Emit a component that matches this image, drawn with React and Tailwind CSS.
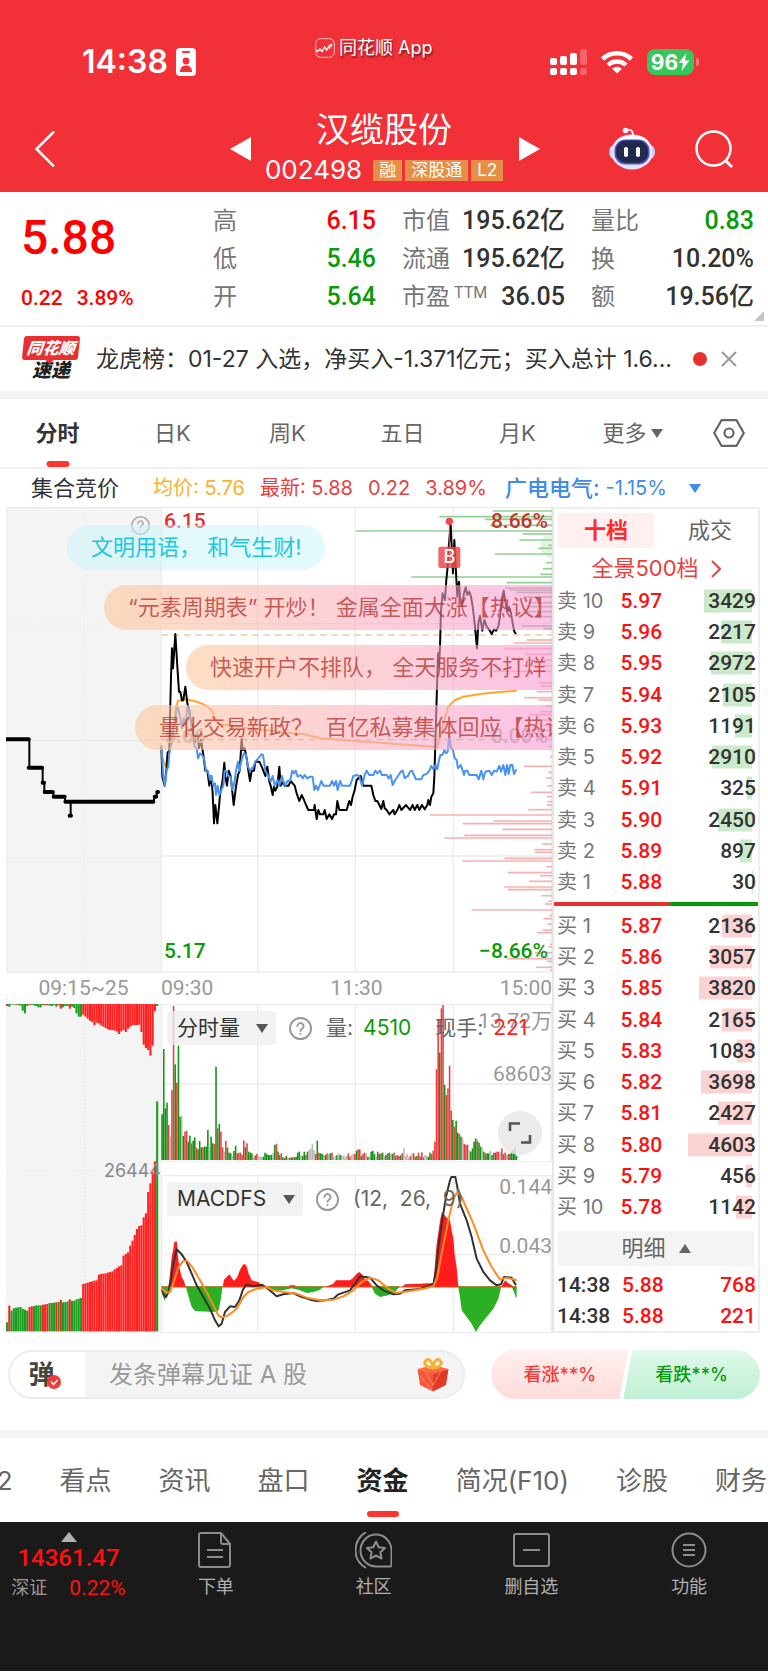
import React, { useState } from "react";

const stats = [
  { label: "高", value: "6.15", color: "text-[#ff0000]" },
  { label: "市值", value: "195.62亿", color: "text-[#333333]" },
  { label: "量比", value: "0.83", color: "text-[#0a9a0a]" },
  { label: "低", value: "5.46", color: "text-[#0a9a0a]" },
  { label: "流通", value: "195.62亿", color: "text-[#333333]" },
  { label: "换", value: "10.20%", color: "text-[#333333]" },
  { label: "开", value: "5.64", color: "text-[#0a9a0a]" },
  { label: "市盈", sup: "TTM", value: "36.05", color: "text-[#333333]" },
  { label: "额", value: "19.56亿", color: "text-[#333333]" },
];

const periods = ["分时", "日K", "周K", "五日", "月K"];

const sells = [
  ["10", "5.97", 3429],
  ["9", "5.96", 2217],
  ["8", "5.95", 2972],
  ["7", "5.94", 2105],
  ["6", "5.93", 1191],
  ["5", "5.92", 2910],
  ["4", "5.91", 325],
  ["3", "5.90", 2450],
  ["2", "5.89", 897],
  ["1", "5.88", 30],
];

const buys = [
  ["1", "5.87", 2136],
  ["2", "5.86", 3057],
  ["3", "5.85", 3820],
  ["4", "5.84", 2165],
  ["5", "5.83", 1083],
  ["6", "5.82", 3698],
  ["7", "5.81", 2427],
  ["8", "5.80", 4603],
  ["9", "5.79", 456],
  ["10", "5.78", 1142],
];

const infoTabs = ["L2", "看点", "资讯", "盘口", "资金", "简况(F10)", "诊股", "财务"];

// Chart data, in chart units (3 units per css pixel)
const priceLine =
  "484,740 487,830 494,857 500,800 503,757 508,757 510,650 513,530 516,445 519,505 526,402 532,500 537,575 541,575 546,602 550,600 556,560 562,610 568,632 572,660 578,690 582,730 588,720 592,700 597,745 603,720 610,765 616,812 622,812 628,857 634,828 638,880 642,970 646,915 652,970 656,930 660,885 668,840 673,788 676,830 681,857 686,812 692,828 701,915 708,860 714,825 719,812 725,718 728,750 734,745 740,775 745,812 750,843 755,812 762,812 766,785 778,785 785,800 790,812 796,828 802,800 808,845 812,857 818,885 822,860 826,872 832,860 838,800 842,857 850,845 854,857 866,857 872,843 878,850 884,857 890,880 898,903 905,885 912,900 918,915 925,930 942,930 944,915 950,957 955,930 960,943 970,943 974,930 980,957 988,943 996,957 1002,943 1008,943 1012,903 1018,930 1040,930 1045,912 1048,903 1053,915 1058,890 1064,870 1070,840 1082,828 1090,857 1114,857 1120,885 1126,903 1132,903 1138,915 1144,927 1150,903 1154,925 1160,930 1168,943 1180,930 1184,943 1192,930 1198,915 1204,930 1218,915 1230,930 1238,915 1244,930 1252,915 1258,930 1266,915 1274,928 1282,915 1285,900 1290,915 1294,890 1300,880 1303,830 1307,700 1311,560 1314,460 1317,500 1320,440 1323,330 1328,280 1335,300 1339,240 1343,200 1347,130 1352,75 1356,160 1359,220 1363,120 1367,200 1372,290 1377,245 1380,290 1386,318 1392,280 1397,262 1402,285 1408,275 1413,290 1418,320 1424,370 1431,445 1435,370 1440,347 1447,392 1453,360 1460,380 1467,388 1475,402 1482,388 1488,392 1495,380 1500,350 1505,300 1511,272 1517,310 1521,335 1527,320 1533,340 1538,370 1543,395 1548,402";

const indexLine =
  "484,735 490,830 495,857 500,810 505,800 508,757 515,730 520,690 526,660 530,625 534,622 540,650 546,685 551,655 557,672 562,620 566,628 572,665 578,700 584,740 590,745 594,775 600,760 606,765 612,775 618,812 624,815 630,840 634,828 640,857 645,850 648,885 653,857 658,885 664,870 670,857 674,812 680,815 686,830 692,830 697,870 703,850 708,812 714,785 718,812 726,775 732,760 738,765 744,800 750,812 760,800 766,785 775,775 785,762 789,765 796,812 806,830 812,845 818,828 824,857 832,840 838,857 846,828 850,845 856,857 862,843 870,843 877,812 882,820 887,812 893,830 902,825 908,835 914,825 922,835 930,830 938,830 943,870 948,857 954,870 964,843 970,857 990,857 996,843 1002,857 1008,843 1013,870 1020,843 1026,857 1050,857 1056,840 1060,828 1070,825 1078,828 1086,857 1094,825 1100,812 1108,825 1120,825 1126,812 1132,820 1140,812 1146,825 1160,825 1166,835 1172,825 1178,855 1186,840 1194,828 1202,815 1208,812 1214,835 1220,830 1224,828 1230,815 1236,812 1242,825 1248,838 1264,838 1270,825 1280,822 1288,812 1294,798 1300,808 1307,795 1312,808 1316,785 1321,765 1327,765 1333,750 1338,760 1343,755 1348,705 1353,745 1359,750 1364,775 1370,780 1374,805 1382,795 1387,808 1392,825 1396,812 1402,812 1408,825 1430,825 1436,838 1444,812 1450,838 1456,815 1468,812 1475,825 1482,812 1490,815 1498,797 1503,815 1510,795 1516,825 1521,795 1526,822 1531,795 1537,795 1542,822 1549,808";

const averageLine =
  "484,765 497,800 505,760 513,720 520,680 528,620 535,602 560,598 590,605 615,615 635,630 645,655 655,672 700,678 740,685 800,690 860,698 910,702 960,715 1060,722 1140,728 1240,736 1312,741 1320,710 1330,670 1345,620 1365,600 1390,590 1440,582 1490,577 1550,572";

// [start x, y] of the chip distribution bars, all ending at the right edge
const chipsAbove = [
  [1478, 33], [1318, 50], [1455, 58], [1470, 76], [1068, 93], [1568, 102], [1558, 120], [1645, 136], [1615, 145], [1485, 162], [1638, 188], [1628, 206], [1620, 223], [1233, 231], [1520, 248],
];
const chipsMixed = [
  [1515, 264], [1528, 270], [1550, 277], [1575, 291], [1585, 308], [1580, 320], [1570, 335], [1590, 350], [1565, 378], [1630, 386],
];
const chipsBelow = [
  [1580, 420], [1542, 429], [1512, 446], [1575, 463], [1580, 480], [1570, 497], [1480, 514], [1615, 549], [1620, 558], [1610, 575], [1573, 593], [1615, 600], [1635, 618], [1620, 635], [1590, 644], [1610, 660], [1630, 676], [1600, 690], [1620, 710], [1645, 740], [1650, 770], [1572, 799], [1645, 817], [1637, 834], [1642, 858], [1593, 877], [1640, 890], [1642, 905], [1640, 915], [1585, 929], [1290, 945], [1480, 963], [1388, 971], [1507, 988], [1393, 1006], [1333, 1014], [1627, 1032], [1603, 1049], [1605, 1057], [1513, 1075], [1386, 1083], [1640, 1100], [1523, 1118], [1620, 1127], [1587, 1144], [1513, 1161], [1523, 1169], [1625, 1187], [1645, 1204], [1635, 1212], [1415, 1230], [1648, 1247], [1630, 1256], [1642, 1272], [1628, 1290], [1610, 1298], [1650, 1333], [1645, 1341], [1605, 1358], [1520, 1376], [1640, 1384], [1608, 1402], [1650, 1410],
];

const volumes =
  "g137 g333 g155 g172 r105 k70 r210 r462 g287 r232 g343 g130 k133 g72 r85 r88 g55 g73 r50 g58 g68 r37 g32 g57 g38 r38 g40 g40 g90 k40 g70 g50 r48 g280 r95 g108 r85 r38 k25 r57 g37 g22 g20 k12 g27 g43 r20 r22 r22 r15 r58 g38 r50 g25 g22 g20 k10 r14 r18 k10 k12 k8 g10 g22 g18 g15 g15 g15 k22 g45 r48 g25 r15 r20 g8 r6 g12 k8 r6 g8 r8 g8 g10 g22 g25 k15 g12 g25 r15 g25 k30 k35 k48 k30 r18 g58 r22 g20 g18 k15 g15 r20 k18 g20 r22 k10 k12 g14 k20 g15 k14 k12 k10 k12 r20 r10 k15 k18 r18 g28 r32 r32 g12 r18 r22 k20 g10 k10 g25 g28 g18 k12 g25 g18 r20 g22 k12 g15 r20 g22 k18 g18 r22 r12 r15 r12 g14 r20 k35 k12 k18 k8 r12 k20 r20 r10 g12 r22 r10 r23 r8 k15 k12 g10 g22 r18 r28 r55 r272 r420 g322 r455 r465 g225 r195 r215 r283 r148 g120 r100 g118 g82 r78 g70 k65 r48 r45 r46 k30 g25 g35 g55 g65 r58 g52 g40 k38 g25 r20 g20 g20 k28 g15 r22 g22 r25 r25 k22 r35 r18 r22 k15 r18 g18 g25 g30 g38 g12"
    .split(" ")
    .map((s) => ({ tone: s[0], size: Number(s.slice(1)) }));

const auctionVolumes =
  "g27 r77 g62 g69 g71 g72 g73 g67 g65 g62 r73 r75 g76 g78 g78 g78 r80 r81 r82 g85 g85 g86 r87 g88 r94 g87 g88 g90 r96 g91 g92 g96 g98 g100 r142 r144 r146 r148 r150 r152 r153 r170 r172 r173 r174 r176 r178 r180 r186 r190 r195 r198 r227 r232 r237 r257 r272 r289 r307 r316 r318 r342 r354 r418 r444 r477 r510 g690"
    .split(" ")
    .map((s) => ({ tone: s[0], size: Number(s.slice(1)) }));

const auctionUnmatched =
  "r6 g8 g2 g2 r2 g3 g5 g20 g28 g6 r3 g3 g4 g6 g10 g10 r3 g4 r4 g5 g6 g3 g8 r4 r14 g10 g6 g6 r14 g8 g12 g28 g38 g38 r32 r38 r44 r50 r54 r64 r56 r58 r64 r68 r72 r76 r78 r78 r80 r82 r90 r82 r78 r84 r74 r68 r64 r63 r63 r62 r84 r122 r132 r138 r155 r125 r22 g6"
    .split(" ")
    .map((s) => ({ tone: s[0], size: Number(s.slice(1)) }));

const tones = { r: "#e8403f", g: "#119411", k: "#b9b9b9" };
const auctionTones = { r: "#ff2222", g: "#1f9f22" };

const macdRed =
  "M505 890 L508 870 L512 830 L515 800 L520 775 L523 754 H531 L533 790 L538 830 L545 860 L552 872 L557 890Z M668 890 L672 868 L680 860 L688 852 L695 862 L702 872 L712 860 L720 838 L728 825 L733 820 L740 828 L746 850 L755 870 L775 875 L785 885 L792 890Z M865 890 L870 885 H885 L890 890Z M970 890 L985 886 L1000 880 L1008 870 H1050 L1060 862 L1070 850 L1078 845 L1086 852 L1094 865 L1105 872 L1115 885 L1118 890Z M1205 890 L1215 882 L1260 880 L1300 878 L1305 820 L1310 760 L1316 720 L1321 685 L1326 665 L1332 672 L1338 680 L1350 690 L1354 715 L1360 745 L1365 800 L1370 830 L1374 880 L1376 890Z M1504 890 L1510 878 L1516 870 L1524 878 L1534 884 L1540 890Z";
const macdGreen =
  "M484 888 L488 915 L494 932 L500 915 L506 888Z M557 888 L566 920 L575 950 L585 962 L640 965 L655 962 L662 930 L668 888Z M795 888 L820 902 L850 900 L875 894 L900 900 L920 908 L940 905 L960 898 L972 888Z M1114 888 L1125 910 L1140 920 L1165 915 L1185 905 L1200 888Z M1374 888 L1380 920 L1385 960 L1400 980 L1415 1000 L1428 1025 L1440 1005 L1460 980 L1480 955 L1495 925 L1504 888Z M1534 888 L1542 905 L1548 922 H1550 V888Z";
const difLine =
  "484,895 492,915 498,920 505,905 512,870 520,820 530,777 545,792 560,815 575,850 590,885 610,920 630,955 645,990 656,1008 665,1000 675,965 690,948 705,950 718,930 728,900 738,883 760,888 785,883 800,892 815,905 830,918 850,912 880,908 900,918 930,928 950,932 975,930 1000,925 1015,912 1050,900 1065,880 1080,858 1110,862 1130,885 1150,900 1180,912 1200,910 1215,900 1260,896 1300,882 1308,840 1314,780 1325,700 1338,620 1350,570 1354,560 1366,560 1372,590 1380,640 1400,690 1415,740 1430,805 1450,845 1470,870 1490,885 1503,882 1512,860 1535,862 1548,885";
const deaLine =
  "484,895 500,907 510,905 520,880 535,830 550,812 562,812 580,835 600,870 620,905 640,945 655,975 665,982 685,975 710,955 730,920 745,905 770,895 800,890 820,900 850,905 890,910 920,922 960,930 1000,928 1030,918 1060,900 1085,875 1110,862 1135,870 1165,895 1190,908 1230,902 1270,895 1300,888 1312,860 1325,790 1345,690 1360,625 1372,604 1385,620 1420,700 1450,780 1475,830 1500,868 1520,862 1550,870";

const Triangle = ({ className }) => (
  <svg viewBox="0 0 12 10" className={className} fill="currentColor" preserveAspectRatio="none" aria-hidden="true">
    <path d="M0 0H12L6 10Z" />
  </svg>
);

const HelpIcon = ({ className }) => (
  <svg viewBox="0 0 24 24" className={className} fill="none" stroke="currentColor" strokeWidth="2" strokeLinecap="round" aria-hidden="true">
    <circle cx="12" cy="12" r="11" />
    <path d="M8.8 9.5a3.2 3.2 0 1 1 4.8 2.8c-1 .6-1.6 1.1-1.6 2.2M12 17.6v.2" />
  </svg>
);

const StatusBar = () => (
  <div className="relative flex h-24 items-center justify-between pt-7 pl-[82px] pr-[69px]">
    <div className="flex items-center gap-2">
      <span className="text-[32px] leading-none font-semibold">14:38</span>
      <svg viewBox="0 0 20 28" className="h-7 w-5" aria-hidden="true">
        <rect width="20" height="28" rx="4" fill="#fff" />
        <rect x="6" y="3" width="8" height="2" rx="1" fill="#f23037" />
        <circle cx="10" cy="13" r="3.4" fill="#f23037" />
        <path d="M4 24c0-4.500 2.600-6.500 6-6.500s6 2 6 6.500z" fill="#f23037" />
      </svg>
    </div>
    <div className="absolute top-[37px] left-[315px] flex items-center gap-1 text-[18px] leading-[22px] [text-shadow:1px_2px_2px_rgba(0,0,0,0.5)]">
      <svg viewBox="0 0 20 20" className="h-5 w-5" fill="none" stroke="#fff" aria-hidden="true">
        <rect x="0.700" y="0.700" width="18.600" height="18.600" rx="5" strokeOpacity="0.700" />
        <path d="M1 12l1.500 1.500L5 11l2 2.500L9.500 9l2 3L14 8.500l1 2" strokeWidth="1.400" />
        <path d="M13.500 7l4-1.500-1 4z" fill="#fff" stroke="none" />
      </svg>
      <span>同花顺 App</span>
    </div>
    <div className="flex items-center">
      <svg viewBox="0 0 37 26" className="h-[26px] w-[37px]" fill="#fff" aria-hidden="true">
        <rect x="0" y="9" width="7" height="7" rx="2" />
        <rect x="10" y="7" width="7" height="9" rx="2" />
        <rect x="20" y="4" width="7" height="12" rx="2" />
        <rect x="30" y="0" width="7" height="16" rx="2" opacity="0.250" />
        <rect x="0" y="19" width="7" height="7" rx="2" />
        <rect x="10" y="19" width="7" height="7" rx="2" />
        <rect x="20" y="19" width="7" height="7" rx="2" />
        <rect x="30" y="19" width="7" height="7" rx="2" opacity="0.250" />
      </svg>
      <svg viewBox="0 0 32 24" className="ml-[14px] h-6 w-8" fill="none" stroke="#fff" strokeWidth="4.500" aria-hidden="true">
        <path d="M1.500 9a21 21 0 0 1 29 0" />
        <path d="M7 15a13 13 0 0 1 18 0" />
        <path d="M16 23.500l-4.800-4.800a7 7 0 0 1 9.600 0z" fill="#fff" stroke="none" />
      </svg>
      <span className="ml-[14px] flex h-[26px] w-[47px] items-center justify-center rounded-lg bg-[#34c759] text-[21px] leading-none font-bold">
        96
        <svg viewBox="0 0 12 18" className="h-[18px] w-3" fill="#fff" aria-hidden="true">
          <path d="M8.500 0L0.500 10H5L3.500 18L11.500 7.500H7Z" />
        </svg>
      </span>
      <span className="ml-[2px] h-2 w-[3px] rounded-r-full bg-white/35" />
    </div>
  </div>
);

const Robot = () => (
  <svg viewBox="0 0 46 44" className="h-11 w-[46px]" aria-hidden="true">
    <path d="M17 3c4-1 7 0 7 5" fill="none" stroke="#dfe2fb" strokeWidth="2" />
    <circle cx="16.500" cy="3.500" r="2.800" fill="#eceefe" />
    <rect x="0" y="18" width="46" height="14" rx="6" fill="#c3c7f3" />
    <ellipse cx="23" cy="25" rx="21" ry="17.500" fill="#e0e2fa" />
    <ellipse cx="23" cy="17" rx="17" ry="9" fill="#fafaff" />
    <rect x="5.500" y="12.500" width="35" height="25" rx="11" fill="#5a50c8" />
    <rect x="7" y="13.500" width="32" height="22.500" rx="10" fill="#1f2a4c" />
    <rect x="15" y="20" width="4" height="10" rx="2" fill="#fff" />
    <rect x="27" y="20" width="4" height="10" rx="2" fill="#fff" />
  </svg>
);

const TitleBar = () => (
  <div className="grid h-24 grid-cols-[1fr_auto_1fr] items-center pt-[10px]">
    <div className="flex items-center justify-between pl-[35px] pr-[14px]">
      <button aria-label="返回">
        <svg viewBox="0 0 20 36" className="h-9 w-5" fill="none" stroke="#fff" strokeWidth="2.500">
          <path d="M19 0.500L1.500 18L19 35.500" />
        </svg>
      </button>
      <button aria-label="上一只">
        <svg viewBox="0 0 21 24" className="h-6 w-[21px]" fill="#fff">
          <path d="M21 0V24L0 12Z" />
        </svg>
      </button>
    </div>
    <div className="flex flex-col items-center gap-[2px]">
      <h1 className="text-[34px] leading-10">汉缆股份</h1>
      <div className="flex items-center gap-[3px]">
        <span className="mr-2 text-[26px] leading-9">002498</span>
        {["融", "深股通", "L2"].map((tag) => (
          <span key={tag} className="bg-[#e58e46] px-[6px] text-[17px] leading-[21px]">
            {tag}
          </span>
        ))}
      </div>
    </div>
    <div className="flex items-center pl-4 pr-[35px]">
      <button aria-label="下一只">
        <svg viewBox="0 0 21 24" className="h-6 w-[21px]" fill="#fff">
          <path d="M0 0V24L21 12Z" />
        </svg>
      </button>
      <button aria-label="智能助手" className="ml-auto">
        <Robot />
      </button>
      <button aria-label="搜索" className="ml-10">
        <svg viewBox="0 0 38 38" className="h-[38px] w-[38px]" fill="none" stroke="#fff" strokeWidth="2.500">
          <circle cx="18.500" cy="18.500" r="17" />
          <path d="M30.500 30.500L37 37" strokeWidth="3" />
        </svg>
      </button>
    </div>
  </div>
);

const Summary = () => (
  <section className="relative grid grid-cols-[166px_1fr] gap-x-[26px] border-b-2 border-[#f0f0f0] pt-[10px] pb-[9px] pl-[21px] pr-[14px] font-['Roboto','Noto_Sans_CJK_SC',sans-serif]">
    <div className="text-[#ff0000]">
      <div className="pt-2 text-[48px] leading-[56px] font-medium">5.88</div>
      <div className="flex gap-[14px] pt-5 text-[21px] leading-6 font-medium">
        <span>0.22</span>
        <span>3.89%</span>
      </div>
    </div>
    <dl className="grid grid-cols-3 gap-x-[26px]">
      {stats.map((item) => (
        <div key={item.label} className="flex h-[38px] items-center justify-between">
          <dt className="flex text-[24px] whitespace-nowrap text-[#777777]">
            {item.label}
            {item.sup && <span className="ml-1 pt-1 text-[16px] leading-5">{item.sup}</span>}
          </dt>
          <dd className={`text-[25px] font-medium whitespace-nowrap ${item.color}`}>{item.value}</dd>
        </div>
      ))}
    </dl>
    <svg viewBox="0 0 10 10" className="absolute right-1 bottom-1 h-[10px] w-[10px]" fill="#c4c4c4" aria-hidden="true">
      <path d="M10 0V10H0Z" />
    </svg>
  </section>
);

const News = () => (
  <section className="flex h-[72px] items-center border-b-8 border-[#f4f4f4] pl-[23px] pr-[31px]">
    <div className="w-14 shrink-0 text-center font-black italic">
      <div className="relative -skew-x-6 rounded-[3px] bg-[#e93030] text-[16px] leading-[24px] text-white">
        同花顺
        <Triangle className="absolute top-6 left-6 h-1 w-2 text-[#e93030]" />
      </div>
      <div className="text-[19px] leading-[22px] text-[#222222]">速递</div>
    </div>
    <a href="#news" className="ml-[17px] min-w-0 flex-1 truncate text-[23px] text-[#333333]">
      龙虎榜：01-27 入选，净买入-1.371亿元；买入总计 1.6...
    </a>
    <span className="ml-4 h-[14px] w-[14px] rounded-full bg-[#e93030]" />
    <button aria-label="关闭" className="ml-[14px]">
      <svg viewBox="0 0 16 16" className="h-4 w-4" stroke="#999" strokeWidth="2">
        <path d="M1 1L15 15M15 1L1 15" />
      </svg>
    </button>
  </section>
);

const PeriodTabs = () => {
  const [active, setActive] = useState("分时");
  return (
    <nav className="grid h-[70px] grid-cols-[repeat(6,1fr)_78px] border-b-2 border-[#f0f0f0] text-[22px]">
      {periods.map((period) => (
        <button
          key={period}
          onClick={() => setActive(period)}
          className={`relative ${period === active ? "font-bold text-[#333333]" : "text-[#666666]"}`}
        >
          {period}
          {period === active && (
            <span className="absolute bottom-0 left-1/2 h-[6px] w-[23px] -translate-x-1/2 rounded-[3px] bg-[#fb3630]" />
          )}
        </button>
      ))}
      <button className="flex items-center justify-center gap-1 text-[#666666]">
        更多
        <Triangle className="h-[9px] w-3" />
      </button>
      <button aria-label="设置" className="flex items-center justify-center">
        <svg viewBox="0 0 32 28" className="h-7 w-8" fill="none" stroke="#666" strokeWidth="2.200" strokeLinejoin="round">
          <path d="M8.500 1.200H23.500L30.800 14L23.500 26.800H8.500L1.200 14Z" />
          <circle cx="16" cy="14" r="4.500" />
        </svg>
      </button>
    </nav>
  );
};

const Danmu = ({ className, children }) => (
  <div className={`flex h-[45px] items-center text-[22px] whitespace-pre ${className}`}>{children}</div>
);

const PriceChart = () => (
  <div className="relative overflow-hidden">
    <svg viewBox="18 21 1638 1398" className="block h-auto w-full" aria-label="分时图">
      <rect x="18" y="21" width="466" height="1398" fill="#f4f4f4" />
      <g stroke="#ececec" strokeWidth="4" fill="none">
        <path d="M20 23H1654V1416H20Z" />
        <path d="M484 21V1419M773 21V1419M1066 21V1419M1360 21V1419" />
        <path d="M484 371H1656M18 721H484M484 1068H1656" />
        <path d="M253 21V1419M18 372H484M18 1074H484" strokeDasharray="6 5" strokeWidth="3" />
      </g>
      <path d="M484 405H1656" stroke="#e5cfa8" strokeWidth="4" strokeDasharray="20 14" />
      <path d="M484 719H1656" stroke="#b5b5b5" strokeWidth="4" strokeDasharray="20 14" />
      <circle cx="1658" cy="137" r="36" fill="#dff3df" />
      <g stroke="#93d093" strokeWidth="5">
        {chipsAbove.map(([x, y]) => (
          <path key={y} d={`M${x} ${y}H1656`} />
        ))}
      </g>
      <g stroke="#8fbf94" strokeWidth="5">
        {chipsMixed.map(([x, y]) => (
          <path key={y} d={`M${x} ${y}H1656`} />
        ))}
      </g>
      <g stroke="#f7b0b0" strokeWidth="5">
        {chipsBelow.map(([x, y]) => (
          <path key={y} d={`M${x} ${y}H1656`} />
        ))}
      </g>
      <path d="M18 718H88V803H128V848H133V876H160V890H195V905H212V947M212 905H462V890H470V876" fill="none" stroke="#000" strokeWidth="6" />
      <path
        d="M18 718H86M86 803H126M128 848H132M134 876H158M161 890H194M196 905H460M209 947H213M464 890H468M472 876H474"
        fill="none"
        stroke="#000"
        strokeWidth="12"
        strokeLinecap="round"
      />
      <g fill="none" strokeWidth="6" strokeLinejoin="round">
        <polyline points={averageLine} stroke="#ffa632" />
        <polyline points={priceLine} stroke="#000" />
        <polyline points={indexLine} stroke="#4a93ee" />
      </g>
      <path d="M1348 64V140" stroke="#e8474a" strokeWidth="3" />
      <circle cx="1348" cy="64" r="11" fill="#f04a4f" />
      <rect x="1315" y="140" width="66" height="64" rx="6" fill="#ee4a4a" fillOpacity="0.850" />
    </svg>
    <div className="absolute inset-0 flex justify-between pl-[158px] pr-1 font-['Roboto'] text-[21px] leading-6 font-medium">
      <div className="flex flex-col justify-between pt-[2px] pb-[10px]">
        <span className="text-[#e33030]">6.15</span>
        <span className="text-[#aaaaaa]">5.66</span>
        <span className="text-[#0a9a0a]">5.17</span>
      </div>
      <div className="flex flex-col justify-between pt-[2px] pb-[10px] text-right">
        <span className="text-[#c43530]">8.66%</span>
        <span className="text-[#aaaaaa]">0.00%</span>
        <span className="text-[#0a9a0a]">−8.66%</span>
      </div>
    </div>
    <span className="absolute top-[38px] left-[432px] w-[23px] text-center text-[18px] leading-6 font-medium text-white">B</span>
    <HelpIcon className="absolute top-[9px] left-[125px] h-[19px] w-[19px] text-[#aaaaaa]" />
    <div className="absolute inset-0 flex flex-col gap-[15px] pt-[18px] text-[#b83a36]/80">
      <Danmu className="ml-[61px] w-[258px] rounded-full bg-[#caf4f8]/50 pl-6 text-[#1cc8dc]">文明用语， 和气生财!</Danmu>
      <Danmu className="ml-[98px] rounded-l-full bg-linear-to-r from-[#fdc89a]/60 to-[#f99ad6]/60 pl-6">
        “元素周期表” 开炒！ 金属全面大涨【热议】
      </Danmu>
      <Danmu className="ml-[180px] rounded-l-full bg-linear-to-r from-[#fdc89a]/60 to-[#f99ad6]/60 pl-6">
        快速开户不排队， 全天服务不打烊
      </Danmu>
      <Danmu className="ml-[129px] rounded-l-full bg-linear-to-r from-[#fdc89a]/60 to-[#f99ad6]/60 pl-6">
        量化交易新政？  百亿私募集体回应【热议】
      </Danmu>
    </div>
  </div>
);

const AuctionVolume = () => (
  <div className="relative min-w-0 flex-[155]">
    <svg viewBox="18 40 465 988" className="block h-auto w-full" aria-label="集合竞价量">
      <rect x="18" y="40" width="465" height="988" fill="#f4f4f4" />
      <path d="M253 40V1022M18 540H483" stroke="#e8e8e8" strokeWidth="3" strokeDasharray="6 5" />
      {auctionUnmatched.map((bar, i) => (
        <rect key={i} x={18 + i * 6.72} y="40" width="6.400" height={bar.size} fill={auctionTones[bar.tone]} />
      ))}
      {auctionVolumes.map((bar, i) => (
        <rect key={i} x={18 + i * 6.72} y={1022 - bar.size} width="6.400" height={bar.size} fill={auctionTones[bar.tone]} />
      ))}
    </svg>
    <span className="absolute top-[155px] right-0 text-[18px] leading-6 text-[#888888]">26444</span>
  </div>
);

const IndicatorSelect = ({ label, value, className }) => (
  <div className="relative">
    <select
      aria-label={label}
      defaultValue={value}
      className={`h-[34px] appearance-none rounded-sm bg-[#efefef]/80 pl-[10px] text-[21px] text-[#333333] ${className}`}
    >
      <option>{value}</option>
    </select>
    <Triangle className="pointer-events-none absolute top-[13px] right-[8px] h-[9px] w-3 text-[#555555]" />
  </div>
);

const VolumeChart = () => (
  <div className="relative">
    <svg viewBox="483 40 1173 475" className="block h-auto w-full" aria-label="分时量">
      <g stroke="#ececec" strokeWidth="4" fill="none">
        <path d="M485 42H1654V514H485Z" />
        <path d="M773 40V515M1066 40V515M1360 40V515M484 280H1656" />
      </g>
      {volumes.map((bar, i) => (
        <rect key={i} x={484 + i * 4.9} y={508 - bar.size} width="4.700" height={bar.size} fill={tones[bar.tone]} />
      ))}
    </svg>
    <div className="absolute inset-0 flex flex-col items-end gap-[29px] pt-[5px] font-['Roboto','Noto_Sans_CJK_SC',sans-serif] text-[21px] leading-6 text-[#999999]">
      <span>13.72万</span>
      <span>68603</span>
    </div>
    <div className="absolute top-[7px] left-[6px] flex items-center text-[21px] text-[#666666]">
      <IndicatorSelect label="副图指标" value="分时量" className="w-[109px]" />
      <HelpIcon className="ml-[13px] h-[23px] w-[23px] text-[#999999]" />
      <span className="ml-[14px]">量:</span>
      <span className="ml-[10px] text-[#0a9a0a]">4510</span>
      <span className="ml-6">现手:</span>
      <span className="ml-[10px] text-[#ff2020]">221</span>
    </div>
    <button aria-label="全屏" className="absolute right-[10px] bottom-[7px] flex h-11 w-11 items-center justify-center rounded-full bg-[#e8e8e8]/85">
      <svg viewBox="0 0 24 24" className="h-6 w-6" fill="none" stroke="#555" strokeWidth="2.600">
        <path d="M2 10V2.500H12M22 14V21.500H13" />
      </svg>
    </button>
  </div>
);

const MacdChart = () => (
  <div className="relative">
    <svg viewBox="483 554 1173 475" className="block h-auto w-full" aria-label="MACDFS">
      <g stroke="#ececec" strokeWidth="4" fill="none">
        <path d="M485 556H1654V1027H485Z" />
        <path d="M773 554V1029M1066 554V1029M1360 554V1029M484 793H1656" />
      </g>
      <path d={macdGreen} fill="#2bb024" />
      <path d={macdRed} fill="#ff1c1c" />
      <path d="M484 890H1550" stroke="#e0541c" strokeWidth="3" />
      <g fill="none" strokeWidth="6" strokeLinejoin="round">
        <polyline points={difLine} stroke="#333" />
        <polyline points={deaLine} stroke="#ff8a1f" />
      </g>
    </svg>
    <div className="absolute inset-0 flex flex-col items-end gap-[35px] font-['Roboto'] text-[21px] leading-6 text-[#999999]">
      <span>0.144</span>
      <span>0.043</span>
    </div>
    <div className="absolute top-[7px] left-[6px] flex items-center text-[21px] text-[#666666]">
      <IndicatorSelect label="技术指标" value="MACDFS" className="w-[136px]" />
      <HelpIcon className="ml-[13px] h-[23px] w-[23px] text-[#999999]" />
      <span className="ml-[14px] whitespace-pre">(12,  26,  9)</span>
    </div>
  </div>
);

const Depth = ({ side, rows, barColor }) => (
  <table className="h-[313px] w-full text-[21px] leading-6">
    <tbody>
      {rows.map(([level, price, amount]) => (
        <tr key={level}>
          <th scope="row" className="w-[68px] pl-[3px] text-left text-[20px] font-normal whitespace-nowrap text-[#777777]">
            {side} {level}
          </th>
          <td className="font-['Roboto'] font-medium text-[#ff1010]">{price}</td>
          <td className="relative w-[100px] pr-[2px] text-right font-['Roboto'] text-[#333333]">
            <span
              className={`absolute top-1/2 right-[6px] h-[23px] -translate-y-1/2 ${barColor}`}
              style={{ width: `${(amount / 4603) * 64}px` }}
            />
            <span className="relative font-medium">{amount}</span>
          </td>
        </tr>
      ))}
    </tbody>
  </table>
);

const OrderBook = () => (
  <aside className="flex w-[208px] shrink-0 flex-col border-2 border-l-[#e6e6e6] border-[#eeeeee]">
    <div className="flex pt-1 pl-1 text-[22px]">
      <button className="h-[35px] flex-1 rounded-sm bg-[#fff0f0] font-bold text-[#ff2a2a]">十档</button>
      <button className="h-[35px] flex-1 pl-2 text-[#666666]">成交</button>
    </div>
    <button className="flex h-[37px] items-center justify-center gap-3 pt-1 text-[22px] text-[#e84040]">
      全景500档
      <svg viewBox="0 0 10 18" className="h-[18px] w-[10px]" fill="none" stroke="currentColor" strokeWidth="2">
        <path d="M1 1L9 9L1 17" />
      </svg>
    </button>
    <Depth side="卖" rows={sells} barColor="bg-[#cbeacb]" />
    <div className="my-1 flex h-1">
      <span className="flex-[117] bg-[#e93030]" />
      <span className="flex-[88] bg-[#0a9a0a]" />
    </div>
    <Depth side="买" rows={buys} barColor="bg-[#fbd3d3]" />
    <button className="mx-1 mt-2 flex h-[35px] items-center justify-center gap-[13px] bg-[#f4f4f4] text-[22px] text-[#666666]">
      明细
      <Triangle className="h-[9px] w-3 rotate-180" />
    </button>
    <table className="mt-[3px] w-full flex-1 font-['Roboto'] text-[21px] leading-6 font-medium text-[#ff1010]">
      <tbody>
        {["768", "221"].map((amount) => (
          <tr key={amount}>
            <td className="h-[31px] w-[68px] pl-[3px] text-[#333333]">14:38</td>
            <td>5.88</td>
            <td className="pr-[2px] text-right">{amount}</td>
          </tr>
        ))}
      </tbody>
    </table>
  </aside>
);

const DanmuBar = () => (
  <section className="flex gap-[26px] border-b-8 border-[#f4f4f4] px-2 pt-[17px] pb-[31px]">
    <div className="flex h-[49px] flex-[456] items-center overflow-hidden rounded-full border-2 border-[#ececec] bg-[#f4f4f4]">
      <button aria-label="弹幕开关" className="relative h-full w-[75px] shrink-0 bg-white pr-3 text-[26px] font-bold text-[#444444]">
        弹
        <svg viewBox="0 0 14 14" className="absolute bottom-2 left-[37px] h-[14px] w-[14px]" aria-hidden="true">
          <circle cx="7" cy="7" r="7" fill="#f23a36" />
          <path d="M4 6.500L6.500 9.500L10.500 5" fill="none" stroke="#fff" strokeWidth="1.600" />
        </svg>
      </button>
      <input
        aria-label="发条弹幕"
        placeholder="发条弹幕见证 A 股"
        className="h-full min-w-0 flex-1 bg-transparent pl-6 text-[24px] placeholder:text-[#999999]"
      />
      <button aria-label="礼物" className="mr-[14px]">
        <svg viewBox="0 0 32 34" className="h-[34px] w-8">
          <path d="M0.500 11L16 15V33.500L3 27Z" fill="#f4573a" />
          <path d="M31.500 11L16 15V33.500L29 27Z" fill="#e03a26" />
          <path d="M0.500 11L16 7L31.500 11L16 16Z" fill="#ff6a45" />
          <path d="M8 13L16 27M24 13L16 27M3 18L15 32" fill="none" stroke="#ff8a60" strokeWidth="1" />
          <path d="M16 10C9 10 6 5 9 2.500S15 3 16 9c1-6 4-9 7-6.500S23 10 16 10z" fill="none" stroke="#f5b335" strokeWidth="3" />
        </svg>
      </button>
    </div>
    <div className="flex h-[49px] flex-[270] text-[18px] font-medium">
      <button className="flex-1 rounded-l-full bg-linear-to-b from-[#ffefee] to-[#fddcda] text-[#f53b36] [clip-path:polygon(0_0,100%_0,calc(100%-9px)_100%,0_100%)]">
        看涨**%
      </button>
      <button className="-ml-[5px] flex-1 rounded-r-full bg-linear-to-b from-[#dff8ea] to-[#bff0d3] text-[#0a9a0a] [clip-path:polygon(9px_0,100%_0,100%_100%,0_100%)]">
        看跌**%
      </button>
    </div>
  </section>
);

const InfoTabs = () => {
  const [active, setActive] = useState("资金");
  return (
    <nav className="flex h-[84px] gap-[47px] overflow-hidden text-[26px] whitespace-nowrap text-[#666666]">
      {infoTabs.map((tab) => (
        <button
          key={tab}
          onClick={() => setActive(tab)}
          className={`relative shrink-0 first:-ml-[18px] ${tab === active ? "font-bold text-[#222222]" : ""}`}
        >
          {tab}
          {tab === active && (
            <span className="absolute bottom-[5px] left-1/2 h-[6px] w-8 -translate-x-1/2 rounded-[3px] bg-[#fb3630]" />
          )}
        </button>
      ))}
    </nav>
  );
};

const actions = [
  {
    name: "下单",
    icon: (
      <>
        <path d="M2 3a2 2 0 0 1 2-2H24L33 12V33a2 2 0 0 1-2 2H4a2 2 0 0 1-2-2Z" />
        <path d="M24 1V10a2 2 0 0 0 2 2H33M10 18H26M10 25H26" />
      </>
    ),
  },
  {
    name: "社区",
    icon: (
      <>
        <path d="M35 34.500H21A15.500 16 0 1 1 36.500 18.500V33a1.500 1.500 0 0 1-1.500 1.500Z" />
        <path d="M11 0C-3 9-3 28 11 36" />
        <path d="M21 9.500L23.700 15.200L30 16L25.400 20.300L26.600 26.500L21 23.500L15.400 26.500L16.600 20.300L12 16L18.300 15.200Z" />
      </>
    ),
  },
  {
    name: "删自选",
    icon: (
      <>
        <rect x="1" y="2" width="35" height="32" rx="2" />
        <path d="M10 18H27" />
      </>
    ),
  },
  {
    name: "功能",
    icon: (
      <>
        <circle cx="18" cy="18" r="16.500" />
        <path d="M12 13H24M12 18H24M12 23H24" />
      </>
    ),
  },
];

const BottomBar = () => (
  <footer className="flex h-[149px] bg-[#1a1a1a] pt-[10px] text-[18px] text-[#b0b0b0]">
    <button className="flex w-[137px] flex-col items-center font-['Roboto','Noto_Sans_CJK_SC',sans-serif] text-[#ff1010]">
      <Triangle className="h-[10px] w-4 rotate-180 text-[#b0b0b0]" />
      <span className="text-[24px] leading-8 font-medium">14361.47</span>
      <span className="flex items-center gap-[22px] text-[21px] leading-7">
        <span className="text-[18px] text-[#999999]">深证</span>
        0.22%
      </span>
    </button>
    {actions.map((action) => (
      <button key={action.name} className="flex flex-1 flex-col items-center">
        <svg viewBox="0 0 37 37" className="h-[37px] w-[37px]" fill="none" stroke="#8c8c8c" strokeWidth="2" strokeLinejoin="round" aria-hidden="true">
          {action.icon}
        </svg>
        <span className="mt-1 leading-7">{action.name}</span>
      </button>
    ))}
  </footer>
);

const App = () => {
  return (
    <div className="min-h-screen bg-white font-['Inter','Noto_Sans_CJK_SC',sans-serif] text-[#333333]">
      <header className="bg-[#f23037] text-white">
        <StatusBar />
        <TitleBar />
      </header>
      <Summary />
      <News />
      <PeriodTabs />

      <div className="flex h-[38px] items-center pl-[31px] text-[20px] whitespace-nowrap">
        <span className="text-[22px]">集合竞价</span>
        <span className="ml-[34px] text-[#fbb02c]">均价: 5.76</span>
        <span className="ml-[15px] text-[#e84040]">最新: 5.88</span>
        <span className="ml-[15px] text-[#e84040]">0.22</span>
        <span className="ml-[15px] text-[#e84040]">3.89%</span>
        <button className="ml-[18px] flex items-center text-[#3f8cea]">
          <span className="text-[22px] font-medium">广电电气:</span>
          <span className="ml-[6px]">-1.15%</span>
          <Triangle className="ml-[22px] h-[9px] w-3" />
        </button>
      </div>

      {/* Charts + order book */}
      <main className="flex pl-[6px] pr-2">
        <div className="min-w-0 flex-1">
          <PriceChart />
          <div className="flex h-[31px] items-center font-['Roboto'] text-[21px] text-[#999999]">
            <span className="flex-[155] text-center">09:15~25</span>
            <div className="flex flex-[391] justify-between">
              <span>09:30</span>
              <span>11:30</span>
              <span>15:00</span>
            </div>
          </div>
          <div className="flex">
            <AuctionVolume />
            <div className="flex min-w-0 flex-[391] flex-col justify-between">
              <VolumeChart />
              <MacdChart />
            </div>
          </div>
        </div>
        <OrderBook />
      </main>

      <DanmuBar />
      <InfoTabs />
      <BottomBar />
    </div>
  );
};

export default App;
